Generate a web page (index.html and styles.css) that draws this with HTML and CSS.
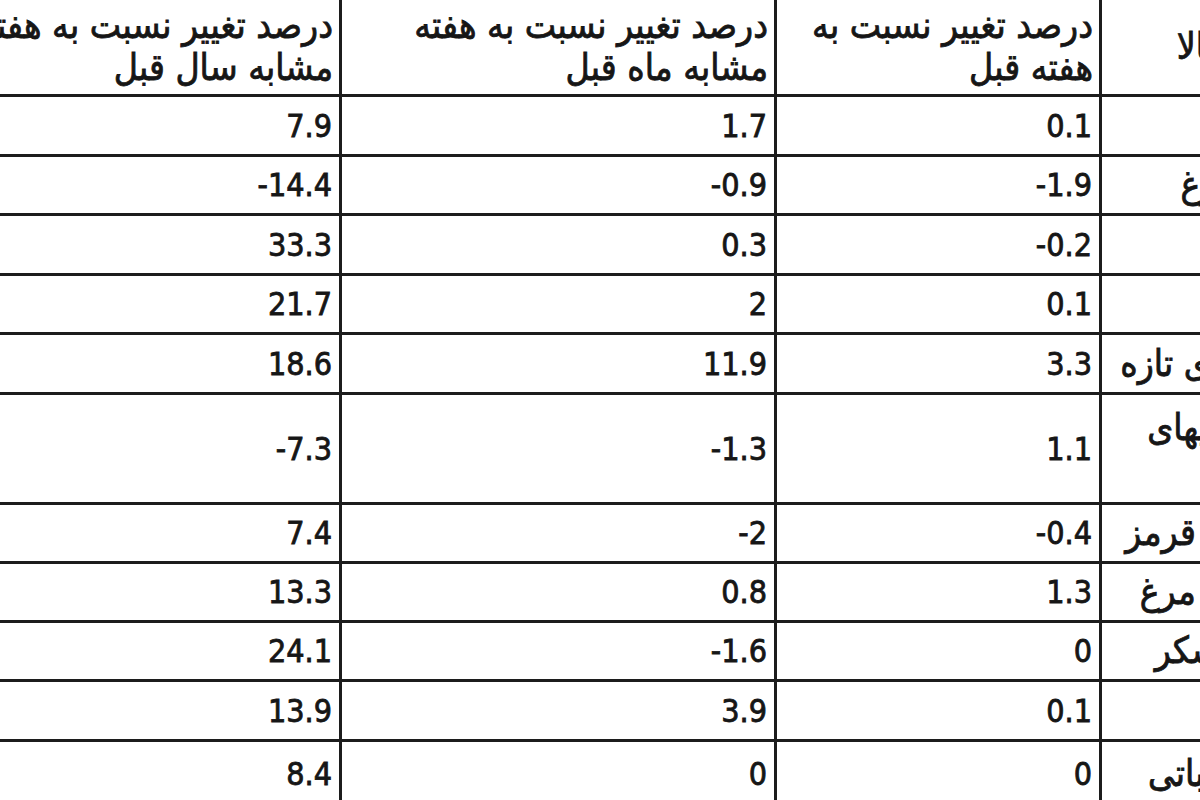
FILE: index.html
```html
<!DOCTYPE html>
<html lang="fa" dir="rtl">
<head>
<meta charset="utf-8">
<title>درصد تغییر قیمت کالاها</title>
<link rel="stylesheet" href="styles.css">
</head>
<body>
<div class="sheet">
  <div class="cell head label">گروه کالا</div>
  <div class="cell head">درصد تغییر نسبت به<br>هفته قبل</div>
  <div class="cell head">درصد تغییر نسبت به هفته<br>مشابه ماه قبل</div>
  <div class="cell head">درصد تغییر نسبت به هفته<br>مشابه سال قبل</div>

  <div class="cell label">برنج</div>
  <div class="cell num">0.1</div><div class="cell num">1.7</div><div class="cell num">7.9</div>

  <div class="cell label">تخم مرغ</div>
  <div class="cell num">-1.9</div><div class="cell num">-0.9</div><div class="cell num">-14.4</div>

  <div class="cell label">حبوبات</div>
  <div class="cell num">-0.2</div><div class="cell num">0.3</div><div class="cell num">33.3</div>

  <div class="cell label">لبنیات</div>
  <div class="cell num">0.1</div><div class="cell num">2</div><div class="cell num">21.7</div>

  <div class="cell label">میوه‌های تازه</div>
  <div class="cell num">3.3</div><div class="cell num">11.9</div><div class="cell num">18.6</div>

  <div class="cell label">نوشیدنیهای<br>گازدار</div>
  <div class="cell num">1.1</div><div class="cell num">-1.3</div><div class="cell num">-7.3</div>

  <div class="cell label">گوشت قرمز</div>
  <div class="cell num">-0.4</div><div class="cell num">-2</div><div class="cell num">7.4</div>

  <div class="cell label">گوشت مرغ</div>
  <div class="cell num">1.3</div><div class="cell num">0.8</div><div class="cell num">13.3</div>

  <div class="cell label">قند و شکر</div>
  <div class="cell num">0</div><div class="cell num">-1.6</div><div class="cell num">24.1</div>

  <div class="cell label">نان</div>
  <div class="cell num">0.1</div><div class="cell num">3.9</div><div class="cell num">13.9</div>

  <div class="cell label">روغن نباتی</div>
  <div class="cell num">0</div><div class="cell num">0</div><div class="cell num">8.4</div>
</div>
</body>
</html>
```

FILE: styles.css
```css
html, body {
  margin: 0;
  padding: 0;
  overflow: hidden;
  background: #ffffff;
}

body {
  width: 1200px;
  height: 800px;
}

.sheet {
  direction: rtl;
  display: grid;
  grid-template-columns: 206px 322px 432px 399px;
  grid-template-rows: 94px 57px 56px 57px 56px 57px 107px 56px 56px 56px 57px 63px;
  gap: 3px;
  width: 1368px;
  margin-left: -60px;
  margin-right: -108px;
  background: #1c1c1c;
  font-family: "DejaVu Sans Condensed", "DejaVu Sans", sans-serif;
  color: #161616;
}

.cell {
  background: #ffffff;
  display: flex;
  align-items: center;
  justify-content: flex-start;
  padding: 0 6px 0 6px;
  font-size: 37px;
  line-height: 42px;
  overflow: hidden;
  white-space: nowrap;
  -webkit-text-stroke: 0.8px #161616;
}

.head {
  text-align: right;
}

.label {
  text-align: right;
  padding-right: 8px;
}

.num {
  direction: ltr;
  justify-content: flex-end;
  font-size: 32px;
  padding-right: 7px;
}
```
